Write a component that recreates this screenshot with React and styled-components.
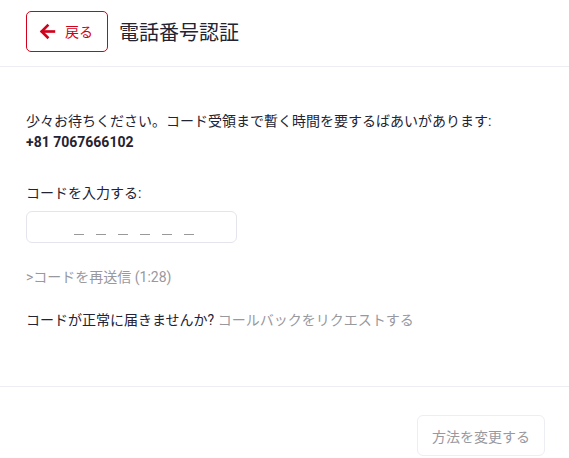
import React from 'react'
import styled, { createGlobalStyle } from 'styled-components'

const Global = createGlobalStyle`
  html, body {
    margin: 0;
    padding: 0;
    background: #fff;
    font-family: Roboto, "Noto Sans CJK JP", sans-serif;
    color: #232333;
  }
`

const Page = styled.div`
  width: 569px;
  height: 458px;
  display: flex;
  flex-direction: column;
  overflow: hidden;
`

const Header = styled.div`
  height: 67px;
  box-sizing: border-box;
  display: flex;
  align-items: center;
  gap: 11px;
  padding: 0 26px 4px;
  border-bottom: 1px solid #ededf4;
`

const BackButton = styled.button`
  width: 82px;
  height: 41px;
  box-sizing: border-box;
  border: 1px solid #d0021b;
  border-radius: 5px;
  background: #fff;
  color: #d0021b;
  display: flex;
  align-items: center;
  padding: 0 0 0 12px;
  gap: 9px;
  font-family: inherit;
  font-size: 14px;
  cursor: pointer;
`

const Title = styled.h1`
  margin: 0;
  font-size: 20px;
  font-weight: 400;
  color: #232333;
`

const Body = styled.div`
  height: 320px;
  box-sizing: border-box;
  padding: 44px 26px 0;
  border-bottom: 1px solid #ededf4;
  font-size: 14px;
`

const Notice = styled.p`
  margin: 0;
  line-height: 21px;
`

const Phone = styled.span`
  display: block;
  font-weight: 700;
`

const Label = styled.div`
  margin-top: 30px;
  line-height: 20px;
`

const CodeBox = styled.div`
  margin-top: 8px;
  width: 211px;
  height: 32px;
  box-sizing: border-box;
  border: 1px solid #e4e4ed;
  border-radius: 6px;
  display: flex;
  justify-content: center;
  align-items: flex-end;
  gap: 12px;
  padding: 0 0 7px 4px;
`

const Slot = styled.span`
  width: 10px;
  height: 1px;
  background: #999;
`

const Resend = styled.div`
  margin-top: 24px;
  color: #98989f;
  line-height: 20px;
`

const Help = styled.div`
  margin-top: 23px;
  line-height: 20px;
`

const Muted = styled.span`
  color: #98989f;
`

const Footer = styled.div`
  flex: 1;
  display: flex;
  justify-content: flex-end;
  align-items: flex-start;
  padding: 28px 24px 0;
`

const SecondaryButton = styled.button`
  width: 128px;
  height: 41px;
  box-sizing: border-box;
  border: 1px solid #ededf4;
  border-radius: 6px;
  background: #fff;
  color: #98989f;
  font-family: inherit;
  font-size: 14px;
`

const App = () => (
  <Page>
    <Global />
    <Header>
      <BackButton>
        <svg width="17" height="17" viewBox="0 0 16 16" fill="none" stroke="#d0021b" strokeWidth="2.5" strokeLinecap="square">
          <path d="M14 8H3" />
          <path d="M8 2.5L2.5 8L8 13.5" />
        </svg>
        戻る
      </BackButton>
      <Title>電話番号認証</Title>
    </Header>
    <Body>
      <Notice>
        少々お待ちください。コード受領まで暫く時間を要するばあいがあります:
        <Phone>+81 7067666102</Phone>
      </Notice>
      <Label>コードを入力する:</Label>
      <CodeBox>
        {[0, 1, 2, 3, 4, 5].map(i => <Slot key={i} />)}
      </CodeBox>
      <Resend>&gt;コードを再送信 (1:28)</Resend>
      <Help>
        コードが正常に届きませんか? <Muted>コールバックをリクエストする</Muted>
      </Help>
    </Body>
    <Footer>
      <SecondaryButton>方法を変更する</SecondaryButton>
    </Footer>
  </Page>
)

export default App
